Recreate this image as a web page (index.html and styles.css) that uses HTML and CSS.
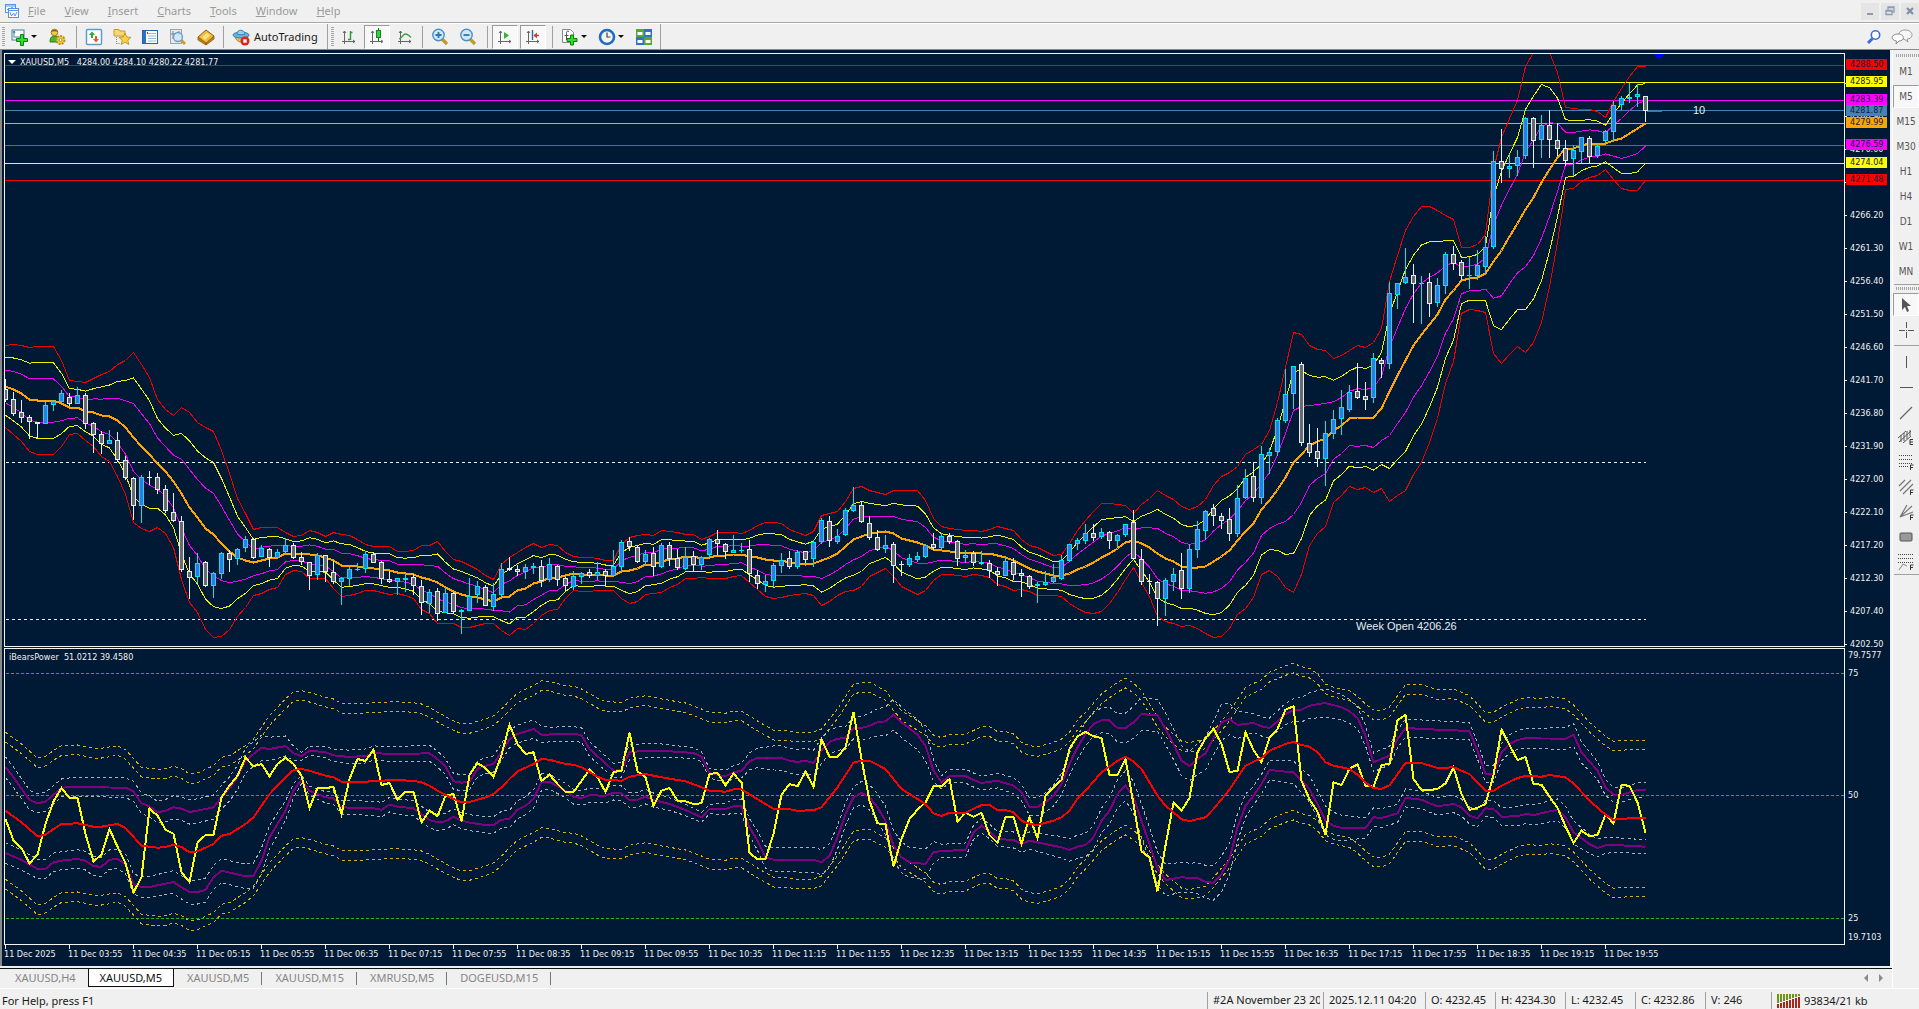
FILE: index.html
```html
<!DOCTYPE html>
<html lang="en">
<head>
<meta charset="utf-8">
<title>XAUUSD,M5</title>
<link rel="stylesheet" href="styles.css">
</head>
<body>
<header class="menubar">
  <svg class="app-icon" viewBox="0 0 16 16" width="16" height="16"><g fill="#fff" stroke="#5b8fe0"><rect x="1.500" y="1.500" width="10" height="8"/><path d="M1.500 3h10M3 7l2-2 1 2 2-3 1 2" fill="none"/><rect x="4.500" y="5.500" width="10" height="9"/><path d="M4.500 7.500h10M6 9l1.500 4 2-3 1.500 3 2-4" fill="none"/></g></svg>
  <nav class="menu">
    <button><u>F</u>ile</button><button><u>V</u>iew</button><button><u>I</u>nsert</button><button><u>C</u>harts</button><button><u>T</u>ools</button><button><u>W</u>indow</button><button><u>H</u>elp</button>
  </nav>
  <div class="window-buttons">
    <button aria-label="Minimize"><svg viewBox="0 0 10 10" width="10" height="10"><path d="M2 8h6" stroke="#8c9cb0" stroke-width="2"/></svg></button>
    <button aria-label="Restore"><svg viewBox="0 0 10 10" width="10" height="10"><path d="M3 4V1h6v5H7M3 1.500h6M1 4.500h6v4H1zM1 5h6" fill="none" stroke="#8c9cb0" stroke-width="1.300"/></svg></button>
    <button aria-label="Close"><svg viewBox="0 0 10 10" width="10" height="10"><path d="M2 2l6 6M8 2L2 8" stroke="#7f8fa6" stroke-width="2.200"/></svg></button>
  </div>
</header>

<div class="toolbar">
  <span class="grip"></span>
  <button class="split" aria-label="New chart"><svg viewBox="0 0 18 18" width="18" height="18"><rect x="1" y="2" width="12" height="10" fill="#fff" stroke="#3f7f9f"/><path d="M3 3v7M2 5l1-2 1 2M4 9h5" stroke="#3f7f9f" fill="none"/><path d="M9.500 6.500h3v4h4v3h-4v4h-3v-4h-4v-3h4z" fill="#2fdc2f" stroke="#0a7f0a"/></svg><i class="caret"></i></button>
  <button aria-label="Profiles"><svg viewBox="0 0 18 18" width="18" height="18"><path d="M2 14c0-5 2-6 5-6s4 2 4 5v1z" fill="#46b82a" stroke="#2c7d17"/><circle cx="6.500" cy="4.500" r="3.300" fill="#f2c84a" stroke="#a8791a"/><path d="M3 4c1-3 6-3 7 0-2-1-5-1-7 0z" fill="#8a5a14"/><circle cx="12.500" cy="12" r="4" fill="#f5d34a" stroke="#b98f1c" stroke-dasharray="2 1" stroke-width="2"/><circle cx="12.500" cy="12" r="1.500" fill="#fff" stroke="#b98f1c"/></svg></button>
  <span class="sep wide"></span>
  <button aria-label="Market watch"><svg viewBox="0 0 18 18" width="18" height="18"><rect x="1.500" y="1.500" width="15" height="15" rx="1" fill="#fff" stroke="#5b9bd0" stroke-width="1.500"/><path d="M4 7l3-3.500L10 7H8v3H6V7z" fill="#2cab2c"/><path d="M8 11l3 3.500 3-3.500h-2V8h-2v3z" fill="#e8572f"/></svg></button>
  <button aria-label="Navigator"><svg viewBox="0 0 18 18" width="18" height="18"><path d="M1 3V1.500h5L7 3h5v5H1z" fill="#f7d774" stroke="#c79a2c"/><path d="M3.500 9v7M3.500 15.500h4" stroke="#888" stroke-dasharray="1 1"/><path d="M12 5l1.800 4 4.200.4-3.200 2.800 1 4.300L12 14.300l-3.800 2.200 1-4.300L6 9.400l4.200-.4z" fill="#f9cf45" stroke="#b98a1a" stroke-width=".8"/></svg></button>
  <button aria-label="Data window"><svg viewBox="0 0 18 18" width="18" height="18"><rect x="1.500" y="2.500" width="15" height="13" fill="#fff" stroke="#2a62b0"/><rect x="2" y="3" width="3" height="12" fill="#2e70c4"/><path d="M7 5.500h8M7 8h8M7 10.500h8M7 13h8" stroke="#9db7d8"/><path d="M6 5h1" stroke="#d22" stroke-width="2"/></svg></button>
  <button aria-label="Terminal"><svg viewBox="0 0 18 18" width="18" height="18"><rect x="1.500" y="1.500" width="11" height="14" fill="#e9e9ea" stroke="#9aa4ae"/><path d="M4 3v8M10 3v4M2 6h10" stroke="#7a8794"/><path d="M12 12l4 4" stroke="#c9a02a" stroke-width="3"/><circle cx="9" cy="9" r="4.500" fill="#cfe6fb" fill-opacity=".85" stroke="#6d9cc8" stroke-width="1.300"/></svg></button>
  <button aria-label="Strategy tester"><svg viewBox="0 0 18 18" width="18" height="18"><path d="M1 9l8-7 8 6-8 8z" fill="#f0bc3a" stroke="#8a5f10"/><path d="M1 9v3l8 5v-2zM9 15v2l8-6V8z" fill="#c07f17" stroke="#8a5f10" stroke-width=".8"/><path d="M5 9l5-4 3 2-5 5z" fill="#f8e08c"/></svg></button>
  <span class="sep"></span>
  <button class="labelled"><svg viewBox="0 0 18 18" width="18" height="18"><path d="M3 8c1 8 12 8 13 0z" fill="#e9c14a" stroke="#a67b18"/><ellipse cx="9" cy="7" rx="8" ry="3" fill="#67b3e0" stroke="#3a7fac"/><path d="M5 6c0-5 7-5 8 0-2 1-6 1-8 0z" fill="#8fd0f2" stroke="#3a7fac"/><circle cx="13" cy="13" r="4.500" fill="#d9251c"/><rect x="11.300" y="11.300" width="3.400" height="3.400" fill="#fff"/></svg><span>AutoTrading</span></button>
  <span class="edge"></span><span class="grip"></span>
  <button aria-label="Bar chart"><svg viewBox="0 0 18 18" width="18" height="18"><path d="M4.500 3v13M2 13.500h13M3 5l1.500-2L6 5M13 12l2 1.500-2 1.500" fill="none" stroke="#666"/><path d="M10.500 3v9M10.500 4.500h2M8 11.500h2.500" stroke="#2a9a2a" stroke-width="1.400" fill="none"/></svg></button>
  <button class="pressed" aria-label="Candlesticks"><svg viewBox="0 0 18 18" width="18" height="18"><path d="M4.500 3v13M2 13.500h13M3 5l1.500-2L6 5M13 12l2 1.500-2 1.500" fill="none" stroke="#666"/><path d="M10.500 0v13" stroke="#186f18"/><rect x="8.500" y="2.500" width="4" height="7" fill="#2fd13f" stroke="#128a1c"/></svg></button>
  <button aria-label="Line chart"><svg viewBox="0 0 18 18" width="18" height="18"><path d="M4.500 3v13M2 13.500h13M3 5l1.500-2L6 5M13 12l2 1.500-2 1.500" fill="none" stroke="#666"/><path d="M3 11c3-1 4-5 6.500-5S13 8 15 9.500" stroke="#3aa43a" stroke-width="1.300" fill="none"/></svg></button>
  <span class="sep"></span>
  <button aria-label="Zoom in"><svg viewBox="0 0 18 18" width="18" height="18"><path d="M11 11l5 5" stroke="#c29b22" stroke-width="3.200"/><circle cx="7.500" cy="7" r="5.700" fill="#cfe9fb" stroke="#4b8fc9" stroke-width="1.400"/><path d="M4.500 7h6M7.500 4v6" stroke="#2b74b0" stroke-width="1.800"/></svg></button>
  <button aria-label="Zoom out"><svg viewBox="0 0 18 18" width="18" height="18"><path d="M11 11l5 5" stroke="#c29b22" stroke-width="3.200"/><circle cx="7.500" cy="7" r="5.700" fill="#cfe9fb" stroke="#4b8fc9" stroke-width="1.400"/><path d="M4.500 7h6" stroke="#2b74b0" stroke-width="1.800"/></svg></button>
  <span class="sep wide"></span>
  <button class="pressed" aria-label="Auto scroll"><svg viewBox="0 0 18 18" width="18" height="18"><path d="M4.500 3v13M2 13.500h13M3 5l1.500-2L6 5M13 12l2 1.500-2 1.500" fill="none" stroke="#666"/><path d="M8 4l5 3.500L8 11z" fill="#35b535"/></svg></button>
  <button class="pressed" aria-label="Chart shift"><svg viewBox="0 0 18 18" width="18" height="18"><path d="M4.500 3v13M2 13.500h13M3 5l1.500-2L6 5M13 12l2 1.500-2 1.500" fill="none" stroke="#666"/><path d="M8.500 2v10" stroke="#2768a5" stroke-width="1.400"/><path d="M15 7.500h-5" stroke="#c4451c" stroke-width="1.400"/><path d="M13 4.500v6l-3.500-3z" fill="#c4451c"/></svg></button>
  <span class="sep wide"></span>
  <button class="split" aria-label="Indicators"><svg viewBox="0 0 18 18" width="18" height="18"><path d="M1.500 1.500h8l3 3v10h-11z" fill="#fff" stroke="#888"/><path d="M8 3.500c-2-1-2.500 0-2.500 2V12M3.500 7.500h4" stroke="#555" fill="none"/><path d="M9.500 7h3v3.500H16v3h-3.500V17h-3v-3.500H6v-3h3.500z" fill="#2fdc2f" stroke="#0a7f0a"/></svg><i class="caret"></i></button>
  <button class="split" aria-label="Periodicity"><svg viewBox="0 0 18 18" width="18" height="18"><circle cx="9" cy="9" r="7" fill="#f4f4f4" stroke="#1d6cc4" stroke-width="2.600"/><path d="M9 4.500V9h3.500" stroke="#444" fill="none" stroke-width="1.200"/></svg><i class="caret"></i></button>
  <button aria-label="Templates"><svg viewBox="0 0 18 18" width="18" height="18"><rect x="1" y="1" width="8" height="8" fill="#55ab25"/><rect x="9" y="1" width="8" height="8" fill="#2e6fd0"/><rect x="1" y="9" width="8" height="8" fill="#2e6fd0"/><rect x="9" y="9" width="8" height="8" fill="#55ab25"/><path d="M2.500 5.500h5M10.500 5.500h5M2.500 13.500h5M10.500 13.500h5" stroke="#fff" stroke-width="3"/></svg></button>
  <span class="edge"></span>
  <div class="toolbar-end">
    <button aria-label="Search"><svg viewBox="0 0 16 16" width="16" height="16"><path d="M6.500 9.500L2 14" stroke="#3b6fd6" stroke-width="3"/><circle cx="9.500" cy="6" r="4.200" fill="#fff" stroke="#3b6fd6" stroke-width="1.600"/></svg></button>
    <button aria-label="Chat"><svg viewBox="0 0 22 16" width="22" height="16"><path d="M14 1c9 0 9 9 2 9l1 3-4-3C6 10 6 1 14 1z" fill="#f7f7f7" stroke="#999"/><path d="M7 5c7 0 7 7 1 7l-3 3 .500-3C-1 11 0 5 7 5z" fill="#fff" stroke="#888"/></svg></button>
  </div>
</div>

<div class="workspace">
  <main class="desk">
    <section class="chart">
      <div class="pane main-pane"><svg class="plot" id="price-plot"></svg><p class="pane-title symbol">XAUUSD,M5&nbsp;&nbsp; 4284.00 4284.10 4280.22 4281.77</p></div>
      <div class="axis price-axis" id="price-axis"></div>
      <div class="pane"><svg class="plot" id="power-plot"></svg><p class="pane-title">iBearsPower&nbsp; 51.0212 39.4580</p></div>
      <div class="axis" id="power-axis"></div>
      <div class="time-axis" id="time-axis"></div>
    </section>
    <nav class="tabs">
      <button>XAUUSD,H4</button><button class="active">XAUUSD,M5</button><button>XAUUSD,M5</button><button>XAUUSD,M15</button><button>XMRUSD,M5</button><button>DOGEUSD,M15</button>
      <svg class="tab-arrows" viewBox="0 0 20 8" width="20" height="8"><path d="M4 0v8L0 4zM15 0v8l4-4z" fill="#8a8a8a"/></svg>
    </nav>
  </main>
  <aside class="side">
    <span class="grip-h"></span>
    <button>M1</button><button class="pressed">M5</button><button>M15</button><button>M30</button><button>H1</button><button>H4</button><button>D1</button><button>W1</button><button>MN</button>
    <span class="rule tight"></span><span class="grip-h"></span>
    <button class="pressed" aria-label="Cursor"><svg viewBox="0 0 16 16" width="16" height="16"><path d="M4 1v12l3-3 2 5 2-1-2-5h4z" fill="#555"/></svg></button>
    <button aria-label="Crosshair"><svg viewBox="0 0 16 16" width="16" height="16"><path d="M8.500 0v6M8.500 10v6M1 8.500h6M10 8.500h6M8 8.500h1" stroke="#555"/></svg></button>
    <span class="rule"></span>
    <button aria-label="Vertical line"><svg viewBox="0 0 16 16" width="16" height="16"><path d="M8.500 2v12" stroke="#555"/></svg></button>
    <button aria-label="Horizontal line"><svg viewBox="0 0 16 16" width="16" height="16"><path d="M2 8.500h13" stroke="#555"/></svg></button>
    <button aria-label="Trendline"><svg viewBox="0 0 16 16" width="16" height="16"><path d="M2 15L14 3" stroke="#666" stroke-width="1.200"/></svg></button>
    <button aria-label="Equidistant channel"><svg viewBox="0 0 16 16" width="16" height="16"><path d="M0 9l8-7M1 13L13 2M5 14l8-7M3 6v7M6 4v8M9 2v8M12 1v6" stroke="#555"/><path d="M15 10.500h-3v5h3M12 13h3" stroke="#333" fill="none"/></svg></button>
    <button aria-label="Fibonacci retracement"><svg viewBox="0 0 16 16" width="16" height="16"><path d="M1 1.500h14M1 5.500h14M1 9.500h14M1 12.500h9" stroke="#444" stroke-dasharray="1 1"/><path d="M12.500 16v-5h3M12 13.500h3" stroke="#333" fill="none"/></svg></button>
    <button aria-label="Fibonacci channel"><svg viewBox="0 0 16 16" width="16" height="16"><path d="M1 7l6-6M2 12L13 1M5 15L15 5" stroke="#777" stroke-width="1.200"/><path d="M12.500 16v-5h3M12 13.500h3" stroke="#333" fill="none"/></svg></button>
    <button aria-label="Fibonacci fan"><svg viewBox="0 0 16 16" width="16" height="16"><path d="M2 13L9 1M2 13L14 2M2 13l13-5" stroke="#777" stroke-width="1.200"/><path d="M12.500 16v-5h3M12 13.500h3" stroke="#333" fill="none"/></svg></button>
    <button aria-label="Rectangle"><svg viewBox="0 0 16 16" width="16" height="16"><rect x="2" y="4" width="12" height="8" rx="1" fill="#999" stroke="#555"/></svg></button>
    <button aria-label="Expansion"><svg viewBox="0 0 16 16" width="16" height="16"><path d="M0 .500h15M0 4.500h15M0 8.500h15" stroke="#444" stroke-dasharray="1 1"/><path d="M1 16l4-6 4 2" stroke="#888" fill="none"/><path d="M12.500 16v-5h3M12 13.500h3" stroke="#333" fill="none"/></svg></button>
    <span class="rule tight"></span>
  </aside>
</div>

<footer class="status">
  <span class="help">For Help, press F1</span>
  <span class="cell profile">#2A November 23 2025</span><span class="cell stamp">2025.12.11 04:20</span><span class="cell">O: 4232.45</span><span class="cell">H: 4234.30</span><span class="cell">L: 4232.45</span><span class="cell">C: 4232.86</span><span class="cell volume">V: 246</span>
  <span class="cell traffic"><svg viewBox="0 0 24 14" width="24" height="14" id="traffic"></svg>93834/21 kb</span>
</footer>
<script src="chart.js"></script>
</body>
</html>
```
FILE: styles.css
```css
* { box-sizing: border-box; }
body {
  margin: 0; height: 100vh; display: flex; flex-direction: column; overflow: hidden;
  background: #f0f0f0; color: #1a1a1a; font: 11px/16px "Noto Sans", sans-serif;
}
button { font: inherit; color: inherit; background: none; border: 0; padding: 0; margin: 0; display: flex; align-items: center; justify-content: center; }
p { margin: 0; }
svg { display: block; flex: none; }

.menubar { height: 23px; flex: none; display: flex; align-items: center; padding-left: 4px; border-bottom: 1px solid #a8a8a8; font-size: 11px; color: #9a9a9a; }
.menu { display: flex; gap: 19px; padding-left: 8px; }
.menu button { display: block; }
.window-buttons { margin-left: auto; display: flex; gap: 2px; }
.window-buttons button { width: 18px; height: 17px; background: #e5e5e5; }

.toolbar { height: 27px; flex: none; display: flex; align-items: center; padding-left: 2px; border-top: 1px solid #fff; border-bottom: 1px solid #8a8a8a; }
.toolbar button { width: 28px; height: 24px; }
.grip { width: 4px; height: 20px; background: repeating-linear-gradient(#a6a6a6 0 1px, #f0f0f0 1px 2px); border-right: 1px solid #f0f0f0; }
.toolbar .split { width: 37px; justify-content: flex-start; padding-left: 5px; gap: 2px; }
.toolbar .labelled { width: 98px; justify-content: flex-start; padding-left: 5px; gap: 4px; }
.caret { border: 3px solid transparent; border-top-color: #111; border-bottom: 0; }
.sep { width: 7px; height: 22px; background: linear-gradient(#a0a0a0, #a0a0a0) 3px 0 / 1px 100% no-repeat; }
.sep.wide { width: 9px; background-position: 5px 0; }
.edge { width: 1px; height: 25px; background: #a0a0a0; margin: 0 3px 0 2px; }
.pressed { background: #f8f8f8; border: 1px solid #fff; border-top-color: #9a9a9a; border-left-color: #9a9a9a; }
.toolbar .pressed { width: 26px; margin: 0 1px; }
.toolbar-end { margin-left: auto; display: flex; padding-right: 3px; }

.workspace { flex: 1; min-height: 0; display: flex; }
.desk { flex: 1; min-width: 0; display: flex; flex-direction: column; }
.chart {
  flex: 1; min-height: 0; margin-right: 2px; padding: 3px 0 0 2px; border-left: 2px solid #8a8a8a; background: #001935;
  display: grid; grid-template-columns: minmax(0, 1fr) 45px; grid-template-rows: minmax(0, 2fr) minmax(0, 1fr) 20px; row-gap: 1px;
  color: #f0f0f0; font: 9px/12px "DejaVu Sans Condensed", "DejaVu Sans", sans-serif;
}
.pane { position: relative; border: 1px solid #f4f4f4; overflow: hidden; }
.plot { width: 100%; height: 100%; shape-rendering: crispEdges; }
.pane-title { position: absolute; left: 4px; top: 2px; }
.symbol { left: 15px; }
.symbol::before { content: ""; position: absolute; left: -12px; top: 4px; border: 4px solid transparent; border-top-color: #fff; border-bottom: 0; }
.axis { position: relative; }
.price-axis { padding-top: 14px; }
.price-label { height: 33px; line-height: 33px; padding-left: 5px; position: relative; }
.price-label::before { content: ""; position: absolute; left: 0; top: 16px; width: 2px; height: 1px; background: #f4f4f4; }
.tag { position: absolute; left: 1px; width: 41px; height: 11px; line-height: 11px; padding-left: 4px; color: #10203a; }
.mark { position: absolute; left: 3px; }
.time-axis { grid-column: 1 / 3; display: flex; overflow: hidden; margin-top: -1px; }
.time-axis p { flex: none; width: 64px; padding-top: 3px; line-height: 12px; white-space: nowrap; background: linear-gradient(#f4f4f4, #f4f4f4) 1px 0 / 1px 4px no-repeat; }

.tabs { height: 20px; flex: none; display: flex; align-items: flex-start; margin-top: 2px; padding-left: 3px; border-top: 1px solid #111; color: #858585; }
.tabs button { height: 18px; padding: 0 12px; position: relative; }
.tabs button + button { padding: 0 13px; }
.tabs button + button::after { content: ""; position: absolute; right: 0; top: 3px; width: 1px; height: 13px; background: #777; }
.tabs .active { background: #fff; color: #111; border: 1px solid #111; border-top: 0; }
.tabs button.active { padding: 0 11px; }
.tabs button.active::after { display: none; }
.tab-arrows { margin: 5px 8px 0 auto; }

.side { width: 27px; flex: none; display: flex; flex-direction: column; padding-top: 3px; color: #555; font: 10px/12px "DejaVu Sans Condensed", sans-serif; border-left: 1px solid #fff; }
.side button { width: 26px; height: 23px; margin: 1px 0; }
.grip-h { height: 3px; margin: 1px 0 2px 3px; background: repeating-linear-gradient(90deg, #a6a6a6 0 1px, #f0f0f0 1px 2px); }
.rule { height: 1px; background: #a0a0a0; margin: 3px 0 3px 1px; }
.rule.tight { margin: 0 0 1px 1px; }

.status { height: 21px; flex: none; display: flex; align-items: center; border-top: 1px solid #fff; padding-top: 3px; }
.help { padding-left: 2px; margin-right: auto; }
.cell { width: 70px; height: 17px; padding-left: 5px; border-left: 1px solid #a0a0a0; white-space: nowrap; overflow: hidden; }
.profile { width: 116px; border-right: 3px solid #f0f0f0; }
.stamp { width: 102px; }
.volume { width: 66px; }
.traffic { width: 148px; display: flex; gap: 3px; align-items: center; }
```
FILE: chart.js
```js
const NS = 'http://www.w3.org/2000/svg';
const LEFT = 5, STEP = 8;          // first bar and bar spacing
const el = (parent, tag, attrs, text) => {
  const n = document.createElementNS(NS, tag);
  for (const k in attrs) n.setAttribute(k, attrs[k]);
  if (text) n.textContent = text;
  parent.appendChild(n);
  return n;
};
const label = (id, cls, text, top, bg) => {
  const p = document.createElement('p');
  p.className = cls; p.textContent = text;
  if (top !== undefined) p.style.top = top + 'px';
  if (bg) p.style.background = bg;
  document.getElementById(id).appendChild(p);
};
const barX = i => LEFT + STEP * i + 0.5;
const line = (g, ys, color, width, dash) => {
  const a = { points: ys.map((y, i) => barX(i) + ',' + y.toFixed(1)).join(' '), fill: 'none', stroke: color, 'stroke-width': width };
  if (dash) a['stroke-dasharray'] = dash;
  el(g, 'polyline', a);
};

/* ---------- price pane: direction, high, body top, body bottom, low ---------- */
const candles = `D379,389,400,402 D392,399,414,416 D400,412,418,423 D415,417,422,439 D422,422,424,438 U402,405,424,424 U400,401,405,411 U390,393,402,402 D393,397,404,406 U387,395,404,404
D393,395,424,429 D422,423,435,453 D431,434,444,454 U430,440,444,444 D432,440,460,462 D456,460,478,480 D477,478,506,520 U475,477,506,523 D471,477,478,485 D473,477,490,494
D485,489,511,513 D493,512,521,522 D516,521,570,572 D557,571,578,599 U553,563,577,583 D561,562,586,587 U572,573,586,598 U552,553,574,579 D550,553,560,572 U548,549,559,565
U536,539,548,552 D538,539,558,559 U545,548,557,557 D548,549,558,567 U549,552,558,558 U538,545,552,553 D543,545,558,559 D552,557,562,565 D562,562,576,590 U553,555,575,580
D555,555,572,582 D561,572,582,584 U577,578,582,605 U567,569,579,586 U563,569,570,571 U551,554,569,573 D552,554,563,563 D561,562,579,584 D571,579,582,583 U578,578,582,595
U573,578,580,592 D574,577,586,595 D580,586,603,615 U589,592,604,613 D588,591,614,621 U587,593,613,613 D592,593,612,614 U609,610,612,634 U578,596,611,611 U581,586,595,603
D585,587,606,606 U583,594,607,611 U563,569,595,596 D557,568,570,571 D565,569,572,576 U564,567,572,579 U563,566,568,574 D560,566,581,587 U558,564,580,582 D565,566,580,586
D577,578,586,591 U571,576,587,590 U572,573,577,584 D569,572,576,578 U562,572,576,580 D569,571,576,585 U550,566,576,576 U540,542,567,572 D537,541,547,551 D546,547,562,563
U550,554,562,566 D547,553,567,576 U543,545,567,568 D542,545,559,566 D549,558,568,570 U547,557,569,570 D551,556,565,571 U556,557,565,570 U538,539,555,558 D530,539,544,555
D543,544,552,559 U535,550,553,553 U543,550,551,553 D540,549,574,582 D570,575,584,589 U575,581,585,592 U563,565,581,587 U553,560,566,573 D551,558,567,569 U550,552,567,569
D551,551,560,563 U540,542,559,567 U518,520,542,544 D516,521,541,547 U529,536,542,544 U508,510,535,536 U487,505,511,512 D501,505,522,523 D516,523,538,540 D530,537,550,551
U535,545,549,553 D542,544,566,583 D561,564,565,576 U554,558,565,567 U552,556,560,562 U544,545,557,558 D533,544,548,550 U533,536,548,549 D533,536,542,544 D540,541,559,566
U550,555,558,563 D551,553,563,566 U551,562,564,565 D560,563,571,578 D567,571,575,586 U557,561,576,576 D558,562,575,580 D569,573,576,597 D575,576,587,589 U582,584,586,603
U571,582,585,586 U564,577,582,583 U555,560,579,580 U544,544,561,562 U538,540,544,550 U524,533,541,544 D524,533,538,541 U528,532,537,539 D531,532,541,549 U534,535,541,547
U524,524,535,537 D510,522,559,560 D549,559,582,585 D574,581,582,594 D581,582,599,626 U578,580,599,616 U568,574,582,591 D553,570,589,599 U544,549,589,593 U521,529,550,558
U510,511,531,540 D504,508,516,526 D513,516,521,529 D508,519,534,541 U485,498,534,537 U469,478,498,499 D462,476,498,502 U446,454,498,504 U448,452,456,474 U418,420,452,456
U369,394,421,423 U366,366,394,409 D362,364,443,446 D424,443,453,457 D428,451,459,467 U421,433,459,486 U410,419,434,439 U390,407,419,435 U385,392,410,412 D363,391,398,399
D382,396,400,410 U353,358,398,403 D358,360,364,378 U282,293,364,369 U283,283,295,309 U248,277,283,284 D264,275,284,323 U276,283,284,324 D273,282,304,317 U278,285,303,307
U252,254,286,294 D246,254,264,270 D260,262,276,280 U257,275,276,289 U250,265,276,280 U236,247,267,273 U151,161,247,249 D129,161,169,183 U154,166,169,178 U150,157,166,176
U117,118,156,159 D117,118,141,168 U115,125,140,158 D110,125,140,158 D123,140,149,156 D140,148,161,166 U145,150,159,176 U137,137,152,163 D136,138,157,164 U144,146,156,158
U130,131,141,142 U101,105,132,142 U96,98,105,110 U83,97,99,103 U84,94,97,107 D96,96,111,122`.split(/\s+/);

/* moving average and outermost upper band, one value per bar */
const mid = [386,389,393,399,400,400,400,403,407,407,411,412,415,416,420,427,437,446,454,463,471,481,493,507,517,528,534,543,551,557,560,562,560,558,557,553,553,553,554,555,557,560,565,565,566,567,568,569,570,572,573,574,577,579,582,587,591,594,596,597,599,601,597,596,590,588,583,581,577,577,575,573,574,574,574,575,575,571,570,568,564,564,561,559,558,556,556,558,557,555,555,554,554,556,557,559,560,560,562,563,564,563,560,557,553,546,539,536,533,532,531,533,538,540,542,545,549,550,551,552,553,552,553,553,555,557,560,564,568,571,573,575,575,573,569,566,562,557,553,548,542,540,543,547,553,558,561,566,567,567,566,561,556,550,540,531,523,509,500,489,477,462,454,445,441,438,430,425,418,417,417,417,408,391,375,360,345,334,324,314,299,290,280,278,277,273,261,250,236,223,209,197,182,169,157,148,148,145,143,143,143,140,138,133,128,123];
const top3 = [345,344,345,347,346,346,346,360,380,381,382,378,374,371,364,360,352,364,377,399,409,415,407,412,422,427,431,450,473,498,513,529,527,527,527,532,536,535,530,532,536,532,534,535,539,544,546,546,546,551,551,550,545,545,541,551,559,561,565,569,575,579,564,557,552,547,543,547,544,545,552,556,557,557,558,560,560,544,537,535,534,535,530,531,532,534,534,539,536,532,532,532,533,530,525,522,522,523,529,532,535,531,515,513,511,501,488,486,490,492,494,490,490,490,490,500,518,526,528,529,530,530,531,529,526,528,530,539,545,547,551,555,554,543,530,520,511,503,503,504,505,513,504,498,490,495,499,506,509,506,499,485,476,472,466,454,449,444,430,402,367,332,334,345,349,350,358,355,350,345,347,342,328,281,255,230,216,206,206,210,215,219,247,247,244,234,169,137,118,100,66,52,42,52,72,107,108,109,109,111,117,101,88,76,66,66];

const price = el(document.getElementById('price-plot'), 'g', { transform: 'translate(-5 -54)' });
const levels = [
  ['4288.50', 65, 59, '#f00000', '#ff0000'], ['4285.95', 82, 76, '#ffff00', '#ffff00'], ['4283.39', 100, 94, '#ff00ff', '#ff00ff'],
  ['4281.87', 110, 105, '#4682b4', '#4682b4'], ['4279.99', 123, 117, '#ffa500', '#ffa500'], ['4276.59', 145, 139, '#ff00ff', '#ff00ff'],
  ['4274.04', 163, 157, '#ffff00', '#ffff00'], ['4271.48', 180, 174, '#f00000', '#ff0000']];
levels.forEach(l => el(price, 'rect', { x: 5, y: l[1], width: 4000, height: 1, fill: l[3] }));
[462.5, 619.5].forEach(y => el(price, 'line', { x1: 6, x2: 1646, y1: y, y2: y, stroke: '#e8f4fa', 'stroke-dasharray': '3 3' }));
const band = k => mid.map((m, i) => m + 0.5 + k * (m - top3[i]));
[[1, '#f00000'], [0.7, '#f0f000'], [0.4, '#f000f0']].forEach(([k, c]) => { line(price, band(-k), c, 1); line(price, band(k), c, 1); });
line(price, band(0), '#ffa500', 2);
candles.forEach((c, i) => {
  const up = c[0] === 'U', [h, t, b, l] = c.slice(1).split(',').map(Number);
  const edge = up ? '#00e5ee' : '#e0f0f4', x = LEFT + STEP * i;
  el(price, 'rect', { x, y: h, width: 1, height: Math.max(l - h, 1), fill: edge });
  el(price, 'rect', { x: x - 2, y: t, width: 5, height: Math.max(b - t, 1), fill: edge });
  if (b - t > 2) el(price, 'rect', { x: x - 1, y: t + 1, width: 3, height: b - t - 2, fill: up ? '#3f74e6' : '#6b6b6b' });
});
el(price, 'path', { d: 'M1653 54h11l-5 5z', fill: '#0000ff' });
el(price, 'line', { x1: 1647, x2: 1662, y1: 111.5, y2: 111.5, stroke: '#d8402a' });
const textStyle = { fill: '#e4ecf0', 'font-family': 'Liberation Sans, sans-serif', 'font-size': 11 };
el(price, 'text', { x: 1356, y: 630, ...textStyle }, 'Week Open 4206.26');
el(price, 'text', { x: 1693, y: 114, ...textStyle }, '10');

for (let i = 0; i < 18; i++) label('price-axis', 'price-label', (4285.8 - 4.9 * i).toFixed(2));
levels.slice(0, 3).concat(levels.slice(4), [levels[3]]).forEach(l => label('price-axis', 'tag', l[0], l[2] - 53, l[4]));

/* ---------- indicator pane: y values in thirds of a pixel ---------- */
const power = [525,590,613,658,632,540,472,432,462,462,570,652,632,555,608,658,745,700,494,515,557,569,685,714,596,573,573,460,425,395,341,367,360,397,360,341,360,395,492,432,432,429,510,405,345,351,317,423,417,467,443,443,535,500,516,455,450,532,393,358,372,399,333,242,300,330,325,411,392,420,444,444,411,377,400,444,384,380,266,382,400,485,440,432,470,472,480,478,390,387,424,389,415,627,645,645,570,452,420,427,383,428,286,338,338,310,205,345,470,538,541,667,585,525,497,475,427,427,405,532,506,518,506,573,597,518,518,600,520,582,455,430,408,315,277,264,277,282,393,393,345,480,622,640,742,605,476,500,462,325,283,254,300,384,381,265,318,355,282,255,197,187,410,466,503,572,415,423,374,361,425,428,363,360,228,213,405,438,438,435,418,370,450,498,491,480,393,257,303,348,339,420,422,458,491,547,597,560,577,573,512,538,422,426,475,566];
/* the smooth curves are keyed as bar:value and filled in linearly */
const keyed = s => {
  const k = s.trim().split(/\s+/).map(p => p.split(':').map(Number)), out = [];
  for (let j = 0; j < k.length - 1; j++)
    for (let i = k[j][0]; i < k[j + 1][0]; i++)
      out.push(k[j][1] + (k[j + 1][1] - k[j][1]) * (i - k[j][0]) / (k[j + 1][0] - k[j][0]));
  out.push(k[k.length - 1][1]);
  return out;
};
const avg = keyed('0:500 2:535 4:577 5:572 6:555 7:540 9:538 11:548 12:548 14:540 15:552 17:605 19:611 20:609 21:602 22:609 23:625 24:622 26:600 27:575 28:570 30:540 31:520 32:485 33:450 34:425 35:400 36:378 37:375 38:380 40:395 41:400 42:413 45:413 47:410 49:408 51:411 52:415 53:425 54:440 56:465 57:475 58:474 60:460 61:450 62:430 63:405 64:382 66:360 67:345 68:347 70:360 71:362 72:370 74:398 75:408 77:410 78:398 80:390 82:400 85:412 87:430 88:440 90:443 91:436 92:436 94:466 95:480 96:494 98:496 99:500 101:499 102:490 103:460 104:430 106:356 107:350 108:350 110:375 112:435 115:480 116:508 117:516 118:506 120:506 122:483 123:483 124:498 125:498 126:505 127:530 128:540 129:543 131:530 132:520 133:500 134:463 135:440 137:385 139:350 140:338 141:352 142:375 143:415 144:455 145:485 146:505 147:526 148:531 150:520 151:495 153:437 155:365 157:342 158:320 160:300 161:293 162:303 163:308 164:325 165:355 166:365 168:375 169:392 170:415 171:433 172:434 173:424 175:357 177:357 179:372 181:370 183:390 185:440 186:440 187:425 189:402 190:396 192:398 193:393 195:400 196:418 198:470 200:512 201:527 203:523 205:523');
const upper = keyed('0:370 1:400 3:468 4:478 5:473 7:432 8:429 15:431 16:442 17:478 18:487 19:505 20:500 21:490 22:494 23:504 24:500 26:490 27:460 28:435 29:400 30:350 31:330 32:312 33:315 35:306 36:328 37:337 38:320 40:325 41:334 43:339 45:336 46:327 48:330 53:328 54:345 55:368 56:412 57:416 58:413 59:375 60:365 61:360 62:325 63:285 64:270 66:255 67:272 71:270 72:273 73:315 76:380 77:378 78:325 80:320 82:320 86:327 87:338 88:388 90:397 91:385 92:380 93:352 94:342 97:342 98:350 99:354 100:350 101:357 102:320 103:294 104:284 105:282 106:252 107:252 108:245 109:235 110:232 111:212 112:235 114:272 115:305 116:380 117:415 118:396 120:396 121:408 122:417 124:410 126:425 127:445 128:488 129:488 130:475 131:455 132:420 133:360 134:310 135:270 136:240 137:229 138:229 139:252 140:252 141:235 142:210 144:214 145:255 146:300 147:350 148:366 149:345 150:328 151:282 152:235 153:225 154:243 156:237 157:247 158:252 159:232 160:210 161:198 162:197 163:185 165:177 167:190 168:202 169:222 170:275 171:355 173:335 174:285 175:252 178:256 182:260 183:262 184:320 185:390 186:390 187:325 188:300 189:288 190:283 195:284 196:272 197:325 199:380 200:430 201:452 202:453 203:445 204:438 205:438');
const lower = keyed('0:627 2:648 4:675 5:675 6:655 7:650 9:645 10:650 11:667 12:668 13:647 14:645 15:660 16:720 17:729 18:729 21:714 22:730 23:744 24:744 25:738 26:700 27:680 30:697 31:695 32:650 33:580 35:500 36:440 37:407 38:440 40:460 41:462 42:490 46:493 47:497 48:482 49:488 51:493 52:510 53:528 54:535 55:532 56:518 57:530 58:536 60:543 61:543 62:527 63:525 64:497 65:485 66:465 67:414 68:413 70:440 71:458 72:462 73:454 75:455 76:446 77:448 78:468 79:467 80:458 81:468 83:480 85:498 87:520 88:495 90:495 91:487 92:487 93:550 94:590 95:640 96:647 101:647 102:655 103:635 104:580 105:510 106:460 107:447 108:460 109:490 110:530 111:605 112:640 113:655 115:660 116:625 117:621 120:618 121:565 122:545 123:562 124:585 126:588 127:600 128:590 130:600 132:610 133:618 134:608 135:603 136:580 137:530 138:500 139:450 140:425 141:460 142:530 143:600 144:672 145:708 147:700 149:703 150:713 151:717 152:690 153:645 154:550 155:485 156:455 157:420 158:378 160:383 161:385 162:410 163:435 164:480 165:530 166:545 167:552 170:552 171:520 172:522 174:508 175:462 177:467 178:478 179:487 181:480 182:490 183:515 184:523 185:493 186:495 187:518 189:517 190:510 191:513 194:497 195:520 196:565 198:600 199:612 200:604 201:603 205:608');
const spread = keyed('0:31 7:27 16:30 23:36 28:36 32:38 35:30 37:12 42:20 54:24 60:24 66:28 68:22 80:22 88:14 92:22 96:36 102:38 106:32 111:46 115:45 117:20 124:22 128:26 133:34 137:37 142:50 148:44 152:54 156:28 160:32 165:43 171:28 185:25 196:34 201:22 205:21');

const sub = el(document.getElementById('power-plot'), 'g', { transform: 'translate(-5 -650)' });
const py = v => 645 + v / 3;
[674.5, 796.5, 919.5].forEach(y => el(sub, 'line', { x1: 6, x2: 4000, y1: y, y2: y, stroke: '#22b422', 'stroke-dasharray': '3 2' }));
[-235, -206, 206, 235].forEach(d => line(sub, avg.map(v => py(v + d)), '#d9b012', 1, '3 3'));
[upper, lower].forEach(b => [-1, 1].forEach(s => line(sub, b.map((v, i) => py(v + s * spread[i])), '#a9b3bd', 1, '3 3')));
[upper, lower].forEach(b => line(sub, b.map(py), '#800080', 2));
line(sub, power.map(py), '#ffff00', 2);
line(sub, avg.map(py), '#ff0000', 2);

[['79.7577', 1], ['75', 19], ['50', 141], ['25', 264], ['19.7103', 283]].forEach(m => label('power-axis', 'mark', m[0], m[1]));

/* ---------- time axis: one label every eight bars ---------- */
for (let i = 0; i < 26; i++) {
  const t = 195 + 40 * i, two = n => String(n).padStart(2, '0');
  label('time-axis', '', i ? `11 Dec ${two(Math.floor(t / 60))}:${two(t % 60)}` : '11 Dec 2025');
}

const traffic = document.getElementById('traffic');
for (let i = 0; i < 8; i++) {
  el(traffic, 'rect', { x: i * 3, y: 0, width: 2, height: 9 - i, fill: '#6f8f1e' });
  el(traffic, 'rect', { x: i * 3, y: 10 - i, width: 2, height: 4 + i, fill: '#a8281c' });
}
```
